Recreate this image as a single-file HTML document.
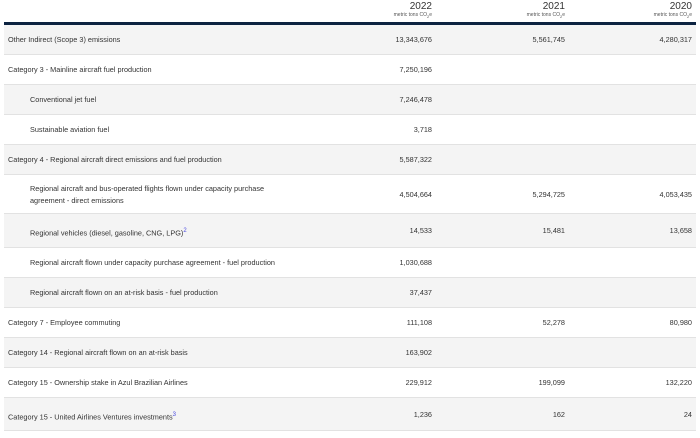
<!DOCTYPE html>
<html><head><style>
body{margin:0;width:700px;height:438px;background:#fff;font-family:"Liberation Sans",sans-serif;color:#333;position:relative;overflow:hidden}
.h{position:absolute;top:1px;text-align:right;width:120px}
.h .y{font-size:10px;color:#333;line-height:11px}
.h .m{font-size:5px;color:#555;line-height:6px}
.line{position:absolute;left:4px;width:692px;top:22px;height:3px;background:#0c2340}
.r{position:absolute;left:4px;width:692px;border-bottom:1px solid #e2e2e2;box-sizing:border-box;font-size:7.3px}
.g{background:#f4f4f4}
.l{position:absolute;left:4px}
.i{left:26px}
.v{position:absolute;text-align:right;width:120px}
sup{color:#4a4adf;font-size:6px}
</style></head><body>
<div class="h" style="left:312px"><div class="y">2022</div><div class="m">metric tons CO<sub style="font-size:4px">2</sub>e</div></div>
<div class="h" style="left:445px"><div class="y">2021</div><div class="m">metric tons CO<sub style="font-size:4px">2</sub>e</div></div>
<div class="h" style="left:572px"><div class="y">2020</div><div class="m">metric tons CO<sub style="font-size:4px">2</sub>e</div></div>
<div class="line"></div>
<div id="t"></div>
<script>
var rows=[
[25,30,1,0,"Other Indirect (Scope 3) emissions","13,343,676","5,561,745","4,280,317"],
[55,30,0,0,"Category 3 - Mainline aircraft fuel production","7,250,196","",""],
[85,30,1,1,"Conventional jet fuel","7,246,478","",""],
[115,30,0,1,"Sustainable aviation fuel","3,718","",""],
[145,30,1,0,"Category 4 - Regional aircraft direct emissions and fuel production","5,587,322","",""],
[175,39,0,1,"Regional aircraft and bus-operated flights flown under capacity purchase<br>agreement - direct emissions","4,504,664","5,294,725","4,053,435"],
[214,34,1,1,"Regional vehicles (diesel, gasoline, CNG, LPG)<sup>2</sup>","14,533","15,481","13,658"],
[248,30,0,1,"Regional aircraft flown under capacity purchase agreement - fuel production","1,030,688","",""],
[278,30,1,1,"Regional aircraft flown on an at-risk basis - fuel production","37,437","",""],
[308,30,0,0,"Category 7 - Employee commuting","111,108","52,278","80,980"],
[338,30,1,0,"Category 14 - Regional aircraft flown on an at-risk basis","163,902","",""],
[368,30,0,0,"Category 15 - Ownership stake in Azul Brazilian Airlines","229,912","199,099","132,220"],
[398,33,1,0,"Category 15 - United Airlines Ventures investments<sup>3</sup>","1,236","162","24"]];
var h="";
rows.forEach(function(r){
var lh=r[1]==39?12:10;var ty=(r[1]-(r[4].indexOf('<br>')>0?2*lh:lh))/2;
var vy=(r[1]-10)/2;
h+='<div class="r'+(r[2]?' g':'')+'" style="top:'+r[0]+'px;height:'+r[1]+'px">'+
'<div class="l'+(r[3]?' i':'')+'" style="top:'+ty+'px;line-height:'+lh+'px">'+r[4]+'</div>'+
'<div class="v" style="left:308px;top:'+vy+'px;line-height:10px">'+r[5]+'</div>'+
'<div class="v" style="left:441px;top:'+vy+'px;line-height:10px">'+r[6]+'</div>'+
'<div class="v" style="left:568px;top:'+vy+'px;line-height:10px">'+r[7]+'</div></div>';});
document.getElementById('t').innerHTML=h;
</script>
</body></html>
